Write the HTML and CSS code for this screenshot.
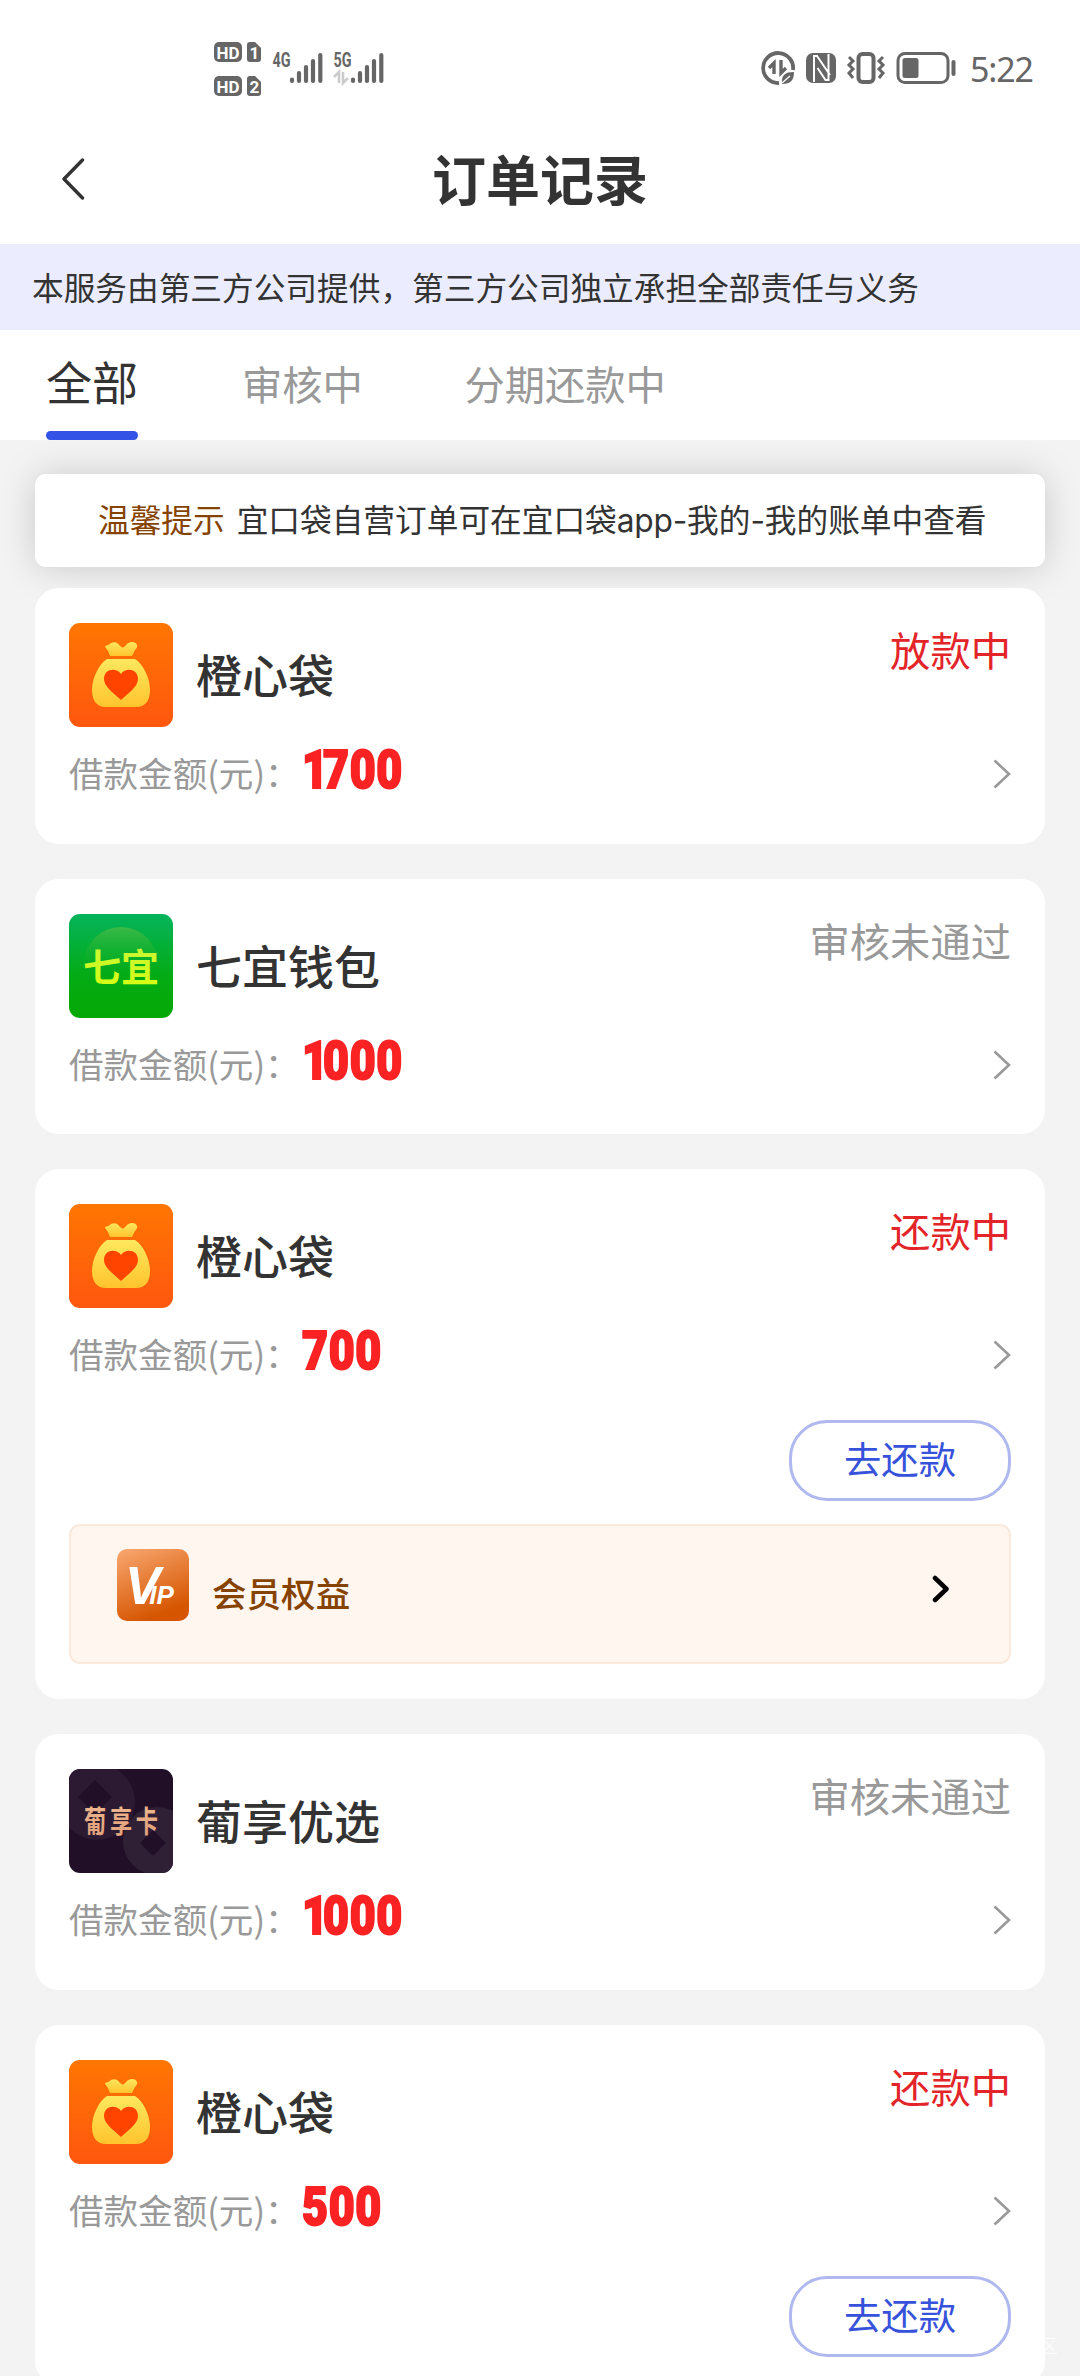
FILE: index.html
```html
<!DOCTYPE html>
<html lang="zh-CN">
<head>
<meta charset="utf-8">
<meta name="viewport" content="width=device-width">
<title>订单记录</title>
<link rel="stylesheet" href="styles.css">
</head>
<body>
<svg class="defs" width="0" height="0" aria-hidden="true">
  <defs>
    <linearGradient id="g-orange" x1="0" y1="0" x2="0" y2="1"><stop offset="0" stop-color="#ff7602"/><stop offset="1" stop-color="#ff570f"/></linearGradient>
    <linearGradient id="g-bag" x1="0" y1="0" x2="0" y2="1"><stop offset="0" stop-color="#ffe85e"/><stop offset="1" stop-color="#ffc42e"/></linearGradient>
    <linearGradient id="g-green" x1="0" y1="0" x2="0" y2="1"><stop offset="0" stop-color="#05b45c"/><stop offset=".6" stop-color="#04ab14"/><stop offset="1" stop-color="#05a805"/></linearGradient>
    <linearGradient id="g-halo" x1="0" y1="0" x2="0" y2="1"><stop offset="0" stop-color="#3cb946"/><stop offset=".6" stop-color="#0cae1a" stop-opacity="0"/></linearGradient>
    <linearGradient id="g-lime" x1="0" y1="0" x2="0" y2="1"><stop offset="0" stop-color="#c5f43c"/><stop offset="1" stop-color="#d8ff10"/></linearGradient>
    <linearGradient id="g-vip" x1="0" y1="0" x2=".4" y2="1"><stop offset="0" stop-color="#f9a871"/><stop offset="1" stop-color="#d55500"/></linearGradient>
    <linearGradient id="g-gold" x1="0" y1="0" x2="0" y2="1"><stop offset="0" stop-color="#f3bd92"/><stop offset="1" stop-color="#dd9c78"/></linearGradient>
    <symbol id="bag" viewBox="0 0 104 104">
      <rect width="104" height="104" rx="11" fill="url(#g-orange)"/>
      <path d="M36 23c2-1 4-1 6-3 4-2 7 0 9 3 2 2 4 2 6-1 3-4 10-4 11 0 1 3-2 4-3 7l-2 4H41l-2-5c-1-2-3-3-3-5z" fill="url(#g-bag)"/>
      <path d="M38 36h28c8 5 15 19 15 31 0 11-5 17-14 17H37c-9 0-14-6-14-17 0-12 7-26 15-31z" fill="url(#g-bag)"/>
      <path d="M52 77C45 70 35 64 35 56c0-10 12-12 17-5 5-7 17-5 17 5 0 8-10 14-17 21z" fill="#ff4400"/>
    </symbol>
    <symbol id="next" viewBox="0 0 18 30"><path d="M1.500 1.500L16 15 1.500 28.500" fill="none" stroke="#999" stroke-width="2.600"/></symbol>
  </defs>
</svg>

<header class="statusbar">
  <svg class="sim" viewBox="0 0 180 56" width="180" height="56">
    <g fill="#666">
      <rect width="28" height="20" rx="5"/><rect y="34" width="28" height="20" rx="5"/>
      <path d="M36 0h5l6 6v11a3 3 0 0 1-3 3h-8a3 3 0 0 1-3-3V3a3 3 0 0 1 3-3z"/>
      <path d="M36 34h5l6 6v11a3 3 0 0 1-3 3h-8a3 3 0 0 1-3-3V37a3 3 0 0 1 3-3z"/>
      <text x="58.500" y="24.500" class="net" textLength="18" lengthAdjust="spacingAndGlyphs">4G</text>
      <text x="119.500" y="24.500" class="net" textLength="18" lengthAdjust="spacingAndGlyphs">5G</text>
    </g>
    <g class="chip">
      <text x="2.500" y="16.500" textLength="23" lengthAdjust="spacingAndGlyphs">HD</text><text x="2.500" y="50.500" textLength="23" lengthAdjust="spacingAndGlyphs">HD</text>
      <text x="35.500" y="16.500">1</text><text x="35.500" y="50.500">2</text>
    </g>
    <path stroke="#666" stroke-width="4.200" stroke-linecap="round" d="M78 37.500v1.500M85 31v8M92 25v14M99 19v20M106.300 13v26M139 37.500v1.500M146 31v8M153 25v14M160 19v20M167.300 13v26"/>
    <path d="M120 35l5-5v11M134 36l-5 5V30" fill="none" stroke="#ccc" stroke-width="2.600"/>
  </svg>
  <div class="status-right">
    <svg viewBox="0 0 196 34" width="196" height="34">
      <g fill="none" stroke="#666" stroke-width="3.800">
        <path d="M32 19A15 15 0 1 0 18 32"/>
        <path d="M8 17l5-5v11M20 9v13l5-5" stroke-width="3.400"/>
        <path d="M21 33c-1-9 3-12 12-12 0 8-3 12-12 12z" fill="#666" stroke="none"/>
        <path d="M21 32l8-7" stroke="#fff" stroke-width="1.300"/>
      </g>
      <rect x="45" y="2" width="30" height="30" rx="7" fill="#666"/>
      <path d="M53 31V5h3l13 19M67.500 3v26h-3L56.500 17" fill="none" stroke="#fff" stroke-width="2"/>
      <rect x="97.500" y="3" width="15" height="28" rx="4" fill="none" stroke="#666" stroke-width="4"/>
      <path d="M88 6l4 4-4 4 4 4-4 4 4 5M122 6l-4 4 4 4-4 4 4 4-4 5" fill="none" stroke="#666" stroke-width="3"/>
      <rect x="137" y="2.500" width="50" height="29" rx="7" fill="none" stroke="#666" stroke-width="3"/>
      <rect x="141.500" y="7" width="16" height="20" rx="2.500" fill="#666"/>
      <path d="M192.500 11v12" stroke="#666" stroke-width="4" stroke-linecap="round"/>
    </svg>
    <span class="clock">5:22</span>
  </div>
</header>

<nav class="titlebar">
  <svg class="back" viewBox="0 0 24 42" width="24" height="42"><path d="M21.500 2L3 21l18.500 19" fill="none" stroke="#333" stroke-width="3.400" stroke-linecap="round" stroke-linejoin="round"/></svg>
  <h1>订单记录</h1>
</nav>

<div class="banner">本服务由第三方公司提供，第三方公司独立承担全部责任与义务</div>

<div class="tabs">
  <span class="tab active">全部</span>
  <span class="tab">审核中</span>
  <span class="tab">分期还款中</span>
</div>

<main>
  <div class="tip"><b>温馨提示</b><span>宜口袋自营订单可在宜口袋<i>app-</i>我的<i>-</i>我的账单中查看</span></div>

  <section class="card">
    <div class="head"><svg class="logo"><use href="#bag"/></svg><h2>橙心袋</h2><span class="state red">放款中</span></div>
    <div class="amount"><span class="label">借款金额(元)：</span><strong><i>1</i>700</strong><svg class="next"><use href="#next"/></svg></div>
  </section>

  <section class="card">
    <div class="head">
      <svg class="logo" viewBox="0 0 104 104">
        <rect width="104" height="104" rx="11" fill="url(#g-green)"/>
        <circle cx="52" cy="50" r="37" fill="url(#g-halo)"/>
        <text x="14" y="67" class="logo-yi" fill="url(#g-lime)" textLength="76">七宜</text>
      </svg>
      <h2>七宜钱包</h2><span class="state">审核未通过</span>
    </div>
    <div class="amount"><span class="label">借款金额(元)：</span><strong><i>1</i>000</strong><svg class="next"><use href="#next"/></svg></div>
  </section>

  <section class="card with-vip">
    <div class="head"><svg class="logo"><use href="#bag"/></svg><h2>橙心袋</h2><span class="state red">还款中</span></div>
    <div class="amount"><span class="label">借款金额(元)：</span><strong>700</strong><svg class="next"><use href="#next"/></svg></div>
    <a class="repay">去还款</a>
    <div class="vip">
      <svg class="vip-logo" viewBox="0 0 72 72" width="72" height="72">
        <rect width="72" height="72" rx="10" fill="url(#g-vip)"/>
        <text x="8" y="55" class="vip-word">V<tspan dx="-11" font-size="26">IP</tspan></text>
      </svg>
      <span>会员权益</span>
      <svg class="vip-next" viewBox="0 0 18 28" width="18" height="28"><path d="M3 3l11.500 11L3 25" fill="none" stroke="#000" stroke-width="4.500" stroke-linecap="round" stroke-linejoin="round"/></svg>
    </div>
  </section>

  <section class="card">
    <div class="head">
      <svg class="logo" viewBox="0 0 104 104">
        <defs><clipPath id="clip"><rect width="104" height="104" rx="11"/></clipPath></defs>
        <g clip-path="url(#clip)">
          <rect width="104" height="104" fill="#200f27"/>
          <circle cx="28" cy="33" r="38" fill="#2b1a31"/><path d="M26 11l17 17-17 17L9 28z" fill="#200f27"/>
          <circle cx="88" cy="72" r="34" fill="#302036"/><path d="M84 61l13 13-13 13-13-13z" fill="#200f27"/>
        </g>
        <g class="logo-pu" fill="url(#g-gold)" transform="translate(15 63) scale(.74 1)"><text textLength="100">葡享卡</text></g>
      </svg>
      <h2>葡享优选</h2><span class="state">审核未通过</span>
    </div>
    <div class="amount"><span class="label">借款金额(元)：</span><strong><i>1</i>000</strong><svg class="next"><use href="#next"/></svg></div>
  </section>

  <section class="card">
    <div class="head"><svg class="logo"><use href="#bag"/></svg><h2>橙心袋</h2><span class="state red">还款中</span></div>
    <div class="amount"><span class="label">借款金额(元)：</span><strong>500</strong><svg class="next"><use href="#next"/></svg></div>
    <a class="repay">去还款</a>
  </section>
</main>
<span class="mark">区</span>
</body>
</html>
```
FILE: styles.css
```css
* { box-sizing: border-box; }
body {
  position: relative;
  margin: 0;
  width: 1080px;
  height: 2376px;
  overflow: hidden;
  background: #f3f3f3;
  color: #333;
  font-family: "Noto Sans CJK SC", sans-serif;
}
h1, h2 { margin: 0; }
svg { display: block; flex: none; }
.defs { position: absolute; }

.statusbar {
  display: flex;
  justify-content: space-between;
  height: 114px;
  padding: 42px 48px 0 214px;
  background: #fff;
}
.net { font: 700 20px Roboto, sans-serif; }
.chip { fill: #fff; font: 700 17px Roboto, sans-serif; }
.status-right { display: flex; gap: 13px; height: 34px; margin-top: 9px; }
.clock { width: 62px; color: #666; font: 34px/36px "Noto Sans", sans-serif; letter-spacing: -1.2px; }

.titlebar {
  display: grid;
  grid-template-columns: 24px 1fr 24px;
  align-items: center;
  height: 130px;
  padding: 0 61px;
  background: #fff;
}
.titlebar h1 { height: 130px; text-align: center; font-size: 54px; line-height: 127px; font-weight: 700; }

.banner {
  height: 86px;
  padding-left: 32px;
  background: #ebedfe;
  font-size: 31.68px;
  line-height: 84px;
}

.tabs { display: flex; height: 110px; padding-left: 46px; background: #fff; }
.tab { margin-right: 101.5px; color: #999; font-size: 40.3px; line-height: 106px; }
.tab.active { margin-right: 104px; color: #333; font-size: 46px; line-height: 100px; }
.tab.active::after { content: ""; display: block; height: 9px; margin-top: 1px; border-radius: 5px; background: #3453e6; }

main { padding: 34px 35px 0; }
.tip {
  display: flex;
  gap: 12px;
  height: 93px;
  margin-bottom: 21px;
  padding-left: 63px;
  border-radius: 11px;
  background: #fff;
  box-shadow: 0 1px 36px rgba(0, 0, 0, .17);
  font-size: 31.68px;
  line-height: 88px;
  white-space: nowrap;
}
.tip b { color: #864300; font-weight: 400; }
.tip i { font-family: Inter, sans-serif; font-style: normal; letter-spacing: -.2px; }

.card {
  position: relative;
  min-height: 255.5px;
  margin-bottom: 35px;
  padding: 35px 34px 28px;
  border-radius: 24px;
  background: #fff;
}
.with-vip { padding-bottom: 35px; }
.head { display: flex; height: 104px; }
.logo { width: 104px; height: 104px; }
.head h2 { flex: 1; margin-left: 23px; font-size: 46px; line-height: 101px; font-weight: 500; }
.state { color: #999; font-size: 40.3px; line-height: 52px; }
.red { color: #e32428; }
.amount { display: flex; align-items: center; height: 82px; margin-top: 6px; }
.label { width: 233px; height: 82px; color: #999; font-size: 34.56px; line-height: 79px; white-space: nowrap; }
.amount strong {
  flex: 1;
  height: 82px;
  color: #fb2224;
  -webkit-text-stroke: 2px #fb2224;
  font: 900 54px/74px Roboto, sans-serif;
  letter-spacing: .8px;
  transform: scaleX(.83);
  transform-origin: left;
}
.amount strong i { font-style: normal; letter-spacing: -6px; }
.next { width: 18px; height: 30px; }
.repay {
  display: block;
  width: 222px;
  height: 81px;
  margin: 24px 0 0 auto;
  border: 3px solid #b0b9ef;
  border-radius: 38px;
  color: #3652da;
  font-size: 37.4px;
  line-height: 71px;
  text-align: center;
}
.vip {
  display: flex;
  align-items: center;
  height: 140px;
  margin-top: 23px;
  padding: 0 59px 0 46px;
  border: 2px solid #fae9dc;
  border-radius: 11px;
  background: #fff6f0;
  color: #864300;
  font-size: 34.56px;
  font-weight: 500;
}
.vip-logo { margin-bottom: 19px; }
.vip span { flex: 1; margin: 0 0 5px 23px; line-height: 50px; }
.vip-next { margin-bottom: 10px; }
.vip-word { fill: #fff; font: italic 700 53px "Liberation Sans", sans-serif; }

.logo-yi { font-size: 38px; font-weight: 700; }
.logo-pu { font-size: 30px; font-weight: 700; }
.mark { position: absolute; left: 1039px; top: 2330px; color: #fff; font-size: 19px; line-height: 30px; opacity: .7; }
```
